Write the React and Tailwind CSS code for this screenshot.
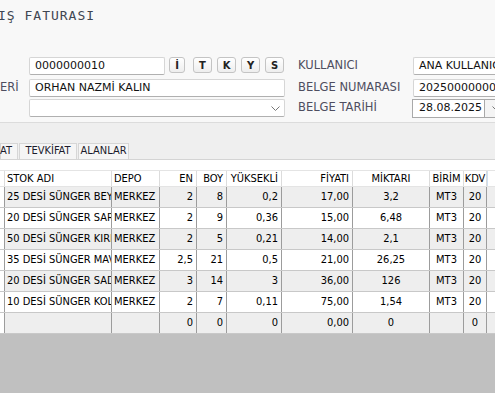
import React from 'react';

const rows = [
  ['25 DESİ SÜNGER BEYAZ', 'MERKEZ', '2', '8', '0,2', '17,00', '3,2', 'MT3', '20'],
  ['20 DESİ SÜNGER SARI', 'MERKEZ', '2', '9', '0,36', '15,00', '6,48', 'MT3', '20'],
  ['50 DESİ SÜNGER KIRMIZI', 'MERKEZ', '2', '5', '0,21', '14,00', '2,1', 'MT3', '20'],
  ['35 DESİ SÜNGER MAVİ', 'MERKEZ', '2,5', '21', '0,5', '21,00', '26,25', 'MT3', '20'],
  ['20 DESİ SÜNGER SADE', 'MERKEZ', '3', '14', '3', '36,00', '126', 'MT3', '20'],
  ['10 DESİ SÜNGER KOLTUK', 'MERKEZ', '2', '7', '0,11', '75,00', '1,54', 'MT3', '20'],
];

const totals = ['', '', '0', '0', '0', '0,00', '0', '', '0'];

const headers = ['STOK ADI', 'DEPO', 'EN', 'BOY', 'YÜKSEKLİ', 'FİYATI', 'MİKTARI', 'BİRİM', 'KDV'];

// width + alignment per column
const cols = [
  'w-[107px] text-left pl-[2px]',
  'w-[48px] text-left pl-[2px]',
  'w-[37px] text-right pr-[3px]',
  'w-[30px] text-right pr-[3px]',
  'w-[55px] text-right pr-[3px]',
  'w-[71px] text-right pr-[3px]',
  'w-[77px] text-center',
  'w-[34px] text-center',
  'w-[23px] text-center',
];

function Field({ className = '', children }) {
  return (
    <div className={`flex h-[18px] items-center rounded-[2px] border border-[#d6d6d6] border-b-[#b0b0b0] bg-white pl-[5px] text-[11px] text-[#111] ${className}`}>
      {children}
    </div>
  );
}

function KeyButton({ label, className = '' }) {
  return (
    <button className={`flex h-[16px] items-center justify-center rounded-[3px] border border-[#c4c4c4] bg-gradient-to-b from-white to-[#eeeeee] text-[10px] font-bold text-[#222] ${className}`}>
      {label}
    </button>
  );
}

function Chevron() {
  return (
    <svg width="9" height="5" viewBox="0 0 9 5" className="text-[#777]">
      <polyline points="0.5,0.5 4.5,4.5 8.5,0.5" fill="none" stroke="currentColor" strokeWidth="1" />
    </svg>
  );
}

function GridRow({ cells, shaded }) {
  const bg = shaded ? 'bg-[#eeeeee]' : 'bg-white';
  return (
    <div className={`flex h-[21px] border-b border-[#c8c8c8] ${bg}`}>
      <div className="w-[5px] shrink-0 border-r border-[#9c9c9c] bg-white" />
      {cells.map((c, i) => (
        <div
          key={i}
          className={`${cols[i]} shrink-0 overflow-hidden whitespace-nowrap border-r border-[#9c9c9c] leading-[20px]`}
        >
          {c}
        </div>
      ))}
      <div className="flex-1" />
    </div>
  );
}

export default function App() {
  return (
    <div className="flex h-[393px] w-[495px] flex-col overflow-hidden bg-[#f8f8f8] font-['DejaVu_Sans',sans-serif]">
      <div className="h-[57px] shrink-0">
        <h1 className="ml-[-2px] mt-[8px] font-['DejaVu_Sans_Mono',monospace] text-[13px] leading-[16px] tracking-[1px] text-[#3f4652]">
          IŞ FATURASI
        </h1>
      </div>

      <div className="flex shrink-0">
        <div className="flex w-[29px] shrink-0 flex-col">
          <div className="h-[18px]" />
          <div className="mt-[4px] flex h-[18px] items-center text-[11.5px] text-[#4e4e60]">ERİ</div>
        </div>

        <div className="flex w-[256px] shrink-0 flex-col">
          <div className="flex">
            <Field className="w-[136px]">0000000010</Field>
            <KeyButton label="İ" className="ml-[4px] w-[16px]" />
            <KeyButton label="T" className="ml-[8px] w-[19px]" />
            <KeyButton label="K" className="ml-[5px] w-[19px]" />
            <KeyButton label="Y" className="ml-[5px] w-[19px]" />
            <KeyButton label="S" className="ml-[5px] w-[19px]" />
          </div>
          <Field className="mt-[4px]">ORHAN NAZMİ KALIN</Field>
          <Field className="mt-[2px] justify-end pr-[4px]">
            <Chevron />
          </Field>
        </div>

        <div className="ml-[13px] flex w-[114px] shrink-0 flex-col text-[11.5px] text-[#4e4e60]">
          <div className="flex h-[18px] items-center">KULLANICI</div>
          <div className="mt-[4px] flex h-[18px] items-center">BELGE NUMARASI</div>
          <div className="mt-[2px] flex h-[18px] items-center">BELGE TARİHİ</div>
        </div>

        <div className="flex flex-1 flex-col">
          <Field className="ml-px whitespace-nowrap rounded-r-none border-r-0">ANA KULLANICI</Field>
          <Field className="ml-px mt-[4px] whitespace-nowrap rounded-r-none border-r-0">2025000000001</Field>
          <div className="mt-[2px] flex h-[19px]">
            <div className="flex w-[73px] items-center border border-[#a9a9a9] bg-white pl-[6px] text-[11px] text-[#111]">
              28.08.2025
            </div>
            <div className="flex flex-1 items-center justify-center border border-l-0 border-[#a9a9a9] bg-[#f4f4f4]">
              <Chevron />
            </div>
          </div>
        </div>
      </div>

      <div className="mt-[4px] flex h-[37px] shrink-0 items-end border-t border-[#dcdcdc] bg-[#efefef] [font-stretch:condensed]">
        <div className="flex gap-px text-[11px] text-[#1c1c2c]">
          <div className="flex h-[16px] w-[18px] items-center justify-end border border-b-0 border-[#d6d6d6] bg-[#f5f5f5] pb-px pr-[5px]">AT</div>
          <div className="flex h-[16px] w-[58px] items-center justify-center border border-b-0 border-[#d6d6d6] bg-[#f5f5f5] pb-px">TEVKİFAT</div>
          <div className="flex h-[16px] w-[51px] items-center justify-center border border-b-0 border-[#d6d6d6] bg-[#f5f5f5] pb-px">ALANLAR</div>
        </div>
      </div>

      <div className="flex flex-1 flex-col border-t border-[#d4d4d4] bg-white pt-[10px] text-[11px] text-black [font-stretch:condensed]">
        <div className="flex h-[17px] shrink-0 border-b border-t border-[#e4e4e4] bg-white">
          <div className="w-[5px] shrink-0 border-r border-[#dcdcdc]" />
          {headers.map((h, i) => (
            <div key={h} className={`${cols[i]} shrink-0 overflow-hidden whitespace-nowrap border-r border-[#dcdcdc] leading-[15px]`}>
              {h}
            </div>
          ))}
          <div className="flex-1 border-l border-[#cfe0f0]" />
        </div>
        {rows.map((r, i) => (
          <GridRow key={i} cells={r} shaded={i % 2 === 0} />
        ))}
        <GridRow cells={totals} shaded />
        <div className="flex-1 bg-[#c0c0c0]" />
      </div>
    </div>
  );
}
